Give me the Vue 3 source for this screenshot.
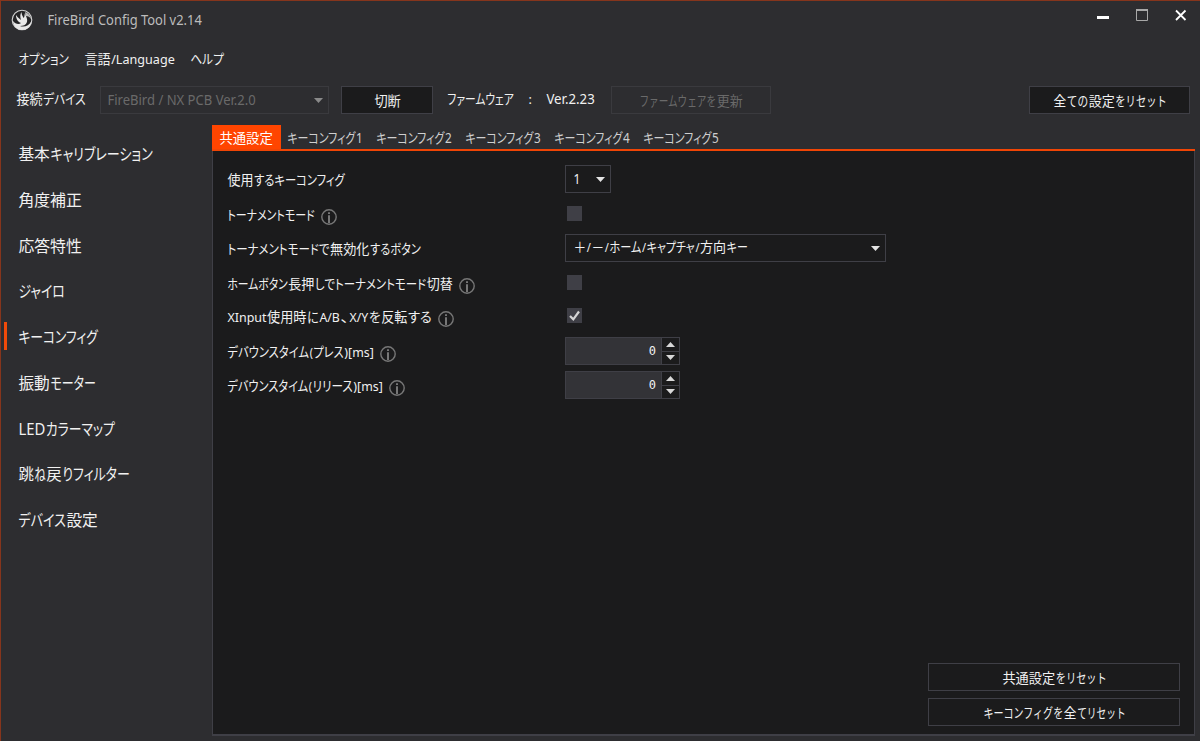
<template>
  <div class="window">
    <header class="titlebar">
      <svg class="logo" width="22" height="22" viewBox="0 0 22 22">
        <circle cx="11" cy="11" r="9.8" fill="#242426" stroke="#d4d4d4" stroke-width="1.1" />
        <path d="M2 12C4 15 8 16 10 14C7 13 5 10 5 6C7 9 9 10 10 11C9 8 9 5 10.5 3C10.5 6 12 7 12.5 9C14 8 13 5 14.5 3.5C14 7 17 9 16 13C15 16 12 17 9 17C13 18.5 18 17 20.5 12C20 18 16 21 11 21C6 21 2 17 2 12Z" fill="#e8e8e8" />
        <path d="M14 3C17 4 20 7 20 10C19 8 17 7 15 7Z" fill="#bdbdbd" />
      </svg>
      <FitText class="title" text="FireBird Config Tool v2.14" :width="155" :size="14" :baseline="25" :height="40" />
      <div class="window-buttons">
        <svg width="94" height="24" viewBox="0 0 94 24">
          <rect x="1" y="15" width="12" height="3" fill="#fff" />
          <path d="M40.5 9V19.5H51.5V9" fill="none" stroke="#a8a8a8" />
          <rect x="40" y="8" width="12" height="2" fill="#a8a8a8" />
          <path d="M80 9.5L89.5 19M89.5 9.5L80 19" stroke="#fff" stroke-width="1.8" />
        </svg>
      </div>
    </header>

    <nav class="menubar">
      <FitText v-for="m in menus" :key="m.text" :text="m.text" :width="m.width" :baseline="24" :height="39" />
    </nav>

    <div class="device-bar">
      <FitText text="接続デバイス" :width="70" :baseline="18" />
      <div class="combo disabled device">
        <FitText text="FireBird / NX PCB Ver.2.0" :width="149" :size="14" :baseline="18" :height="26" />
        <svg class="arrow" width="9" height="5"><path d="M0 0H9L4.5 5Z" fill="#8a8a8a" /></svg>
      </div>
      <button class="btn disconnect"><FitText text="切断" :width="27" :baseline="19" :height="26" /></button>
      <FitText class="fw" text="ファームウェア" :width="67" :baseline="18" />
      <FitText class="colon" text=":" :width="4" :baseline="18" />
      <FitText class="version" text="Ver.2.23" :width="49" :size="13.8" :baseline="18" />
      <button class="btn disabled update"><FitText text="ファームウェアを更新" :width="104" :baseline="19" :height="26" /></button>
      <button class="btn reset-all"><FitText text="全ての設定をリセット" :width="114" :baseline="19" :height="26" /></button>
    </div>

    <div class="body">
      <aside class="sidebar">
        <div
          v-for="(item, i) in pages"
          :key="item.text"
          class="page"
          :class="{ active: page === i }"
          @click="page = i"
        >
          <FitText :text="item.text" :width="item.width" :size="16" :baseline="29" :height="45" />
        </div>
      </aside>

      <main class="content">
        <div class="tabs">
          <div
            v-for="(t, i) in tabs"
            :key="t"
            class="tab"
            :class="{ active: tab === i }"
            @click="tab = i"
          >
            <FitText :text="t" :width="i ? 76 : 54" :size="13.5" :baseline="17.5" :height="24" />
          </div>
        </div>

        <section class="panel">
          <div class="row r1">
            <div class="name"><FitText text="使用するキーコンフィグ" :width="118" /></div>
            <div class="combo small">
              <FitText text="1" :width="7.5" :size="14" :baseline="18" :height="26" />
              <svg class="arrow" width="9" height="5"><path d="M0 0H9L4.5 5Z" fill="#e4e4e4" /></svg>
            </div>
          </div>

          <div class="row r2">
            <div class="name"><FitText text="トーナメントモード" :width="88" /><InfoIcon class="info" /></div>
            <span class="check" @click="tournament = !tournament"><CheckMark v-if="tournament" /></span>
          </div>

          <div class="row r3">
            <div class="name"><FitText text="トーナメントモードで無効化するボタン" :width="194" /></div>
            <div class="combo wide">
              <FitText text="＋/－/ホーム/キャプチャ/方向キー" :width="175" :baseline="17" :height="26" />
              <svg class="arrow" width="9" height="5"><path d="M0 0H9L4.5 5Z" fill="#e4e4e4" /></svg>
            </div>
          </div>

          <div class="row r4">
            <div class="name"><FitText text="ホームボタン長押しでトーナメントモード切替" :width="226" /><InfoIcon class="info" /></div>
            <span class="check" @click="longPress = !longPress"><CheckMark v-if="longPress" /></span>
          </div>

          <div class="row r5">
            <div class="name"><FitText text="XInput使用時にA/B、X/Yを反転する" :width="205" /><InfoIcon class="info" /></div>
            <span class="check" @click="swapButtons = !swapButtons"><CheckMark v-if="swapButtons" /></span>
          </div>

          <div v-for="d in debounce" :key="d.text" class="row" :class="d.cls">
            <div class="name"><FitText :text="d.text" :width="d.width" /><InfoIcon class="info" /></div>
            <div class="spin">
              <span class="value">{{ d.value }}</span>
              <div class="steps">
                <span class="step" @click="d.value++"><svg width="9" height="5"><path d="M0 5H9L4.5 0Z" fill="#d8d8d8" /></svg></span>
                <span class="step" @click="d.value = Math.max(0, d.value - 1)"><svg width="9" height="5"><path d="M0 0H9L4.5 5Z" fill="#d8d8d8" /></svg></span>
              </div>
            </div>
          </div>

          <div class="actions">
            <button class="btn"><FitText text="共通設定をリセット" :width="105" :baseline="19" :height="26" /></button>
            <button class="btn"><FitText text="キーコンフィグを全てリセット" :width="143" :baseline="19" :height="26" /></button>
          </div>
        </section>
      </main>
    </div>
  </div>
</template>

<script setup>
import { ref, reactive, h } from 'vue';

const ctx = document.createElement('canvas').getContext('2d');

// Split a label into kanji, kana and latin runs. Kana are set narrower than the
// kanji so that the whole label takes up the given width.
const splitRuns = (text, width, size) => {
  const parts = text.match(/[\u3400-\u9fff]+|[\u3001-\u30ff]+|[\uff00-\uffef]+|[ -~]+/g) || [];
  ctx.font = `${size}px "Noto Sans"`;
  const runs = parts.map((t) => {
    if (/[\u3001-\u30ff]/.test(t)) {
      const small = (t.match(/[ァィゥェォャュョッ、]/g) || []).length;
      return { t, kana: true, w: t.length - small * 0.25 };
    }
    if (/[ -~]/.test(t)) return { t, w: ctx.measureText(t).width * 0.95 };
    return { t, w: t.length * size, full: /[\uff00-\uffef]/.test(t) };
  });
  const sum = (list) => list.reduce((a, r) => a + r.w, 0);
  const kana = runs.filter((r) => r.kana);
  const stretch = kana.length ? kana : runs;
  const rest = width - (kana.length ? sum(runs.filter((r) => !r.kana)) : 0);
  const k = rest / sum(stretch);
  stretch.forEach((r) => { r.w *= k; });
  let x = 0;
  runs.forEach((r) => { r.x = x; x += r.w; });
  return runs;
};

const FitText = ({ text, width, size = 13.33, baseline = 20, height = 28 }) =>
  h('svg', { width, height, style: { fontSize: `${size}px` } }, [
    h('text', { y: baseline, fill: 'currentColor' }, splitRuns(text, width, size).map((r) =>
      h('tspan', {
        x: r.x + 0.4,
        textLength: r.w - 0.6,
        lengthAdjust: 'spacingAndGlyphs',
        class: { 'full-width': r.full },
      }, r.t))),
  ]);
FitText.props = ['text', 'width', 'size', 'baseline', 'height'];

const InfoIcon = () => h('svg', { width: 16, height: 16, viewBox: '0 0 16 16' }, [
  h('circle', { cx: 8, cy: 8, r: 7.2, fill: 'none', stroke: '#777', 'stroke-width': 1.4 }),
  h('path', { d: 'M8 3.2V5M8 6.3V14', stroke: '#777', 'stroke-width': 2 }),
]);

const CheckMark = () => h('svg', { width: 15, height: 15 }, [
  h('path', { d: 'M3 8L6.3 11.3L12 3.5', fill: 'none', stroke: '#d4d4d4', 'stroke-width': 2.2 }),
]);

const menus = [
  { text: 'オプション', width: 51 },
  { text: '言語/Language', width: 91 },
  { text: 'ヘルプ', width: 34 },
];

const pages = [
  { text: '基本キャリブレーション', width: 135 },
  { text: '角度補正', width: 64 },
  { text: '応答特性', width: 64 },
  { text: 'ジャイロ', width: 47 },
  { text: 'キーコンフィグ', width: 80 },
  { text: '振動モーター', width: 78 },
  { text: 'LEDカラーマップ', width: 97 },
  { text: '跳ね戻りフィルター', width: 112 },
  { text: 'デバイス設定', width: 80 },
];
const page = ref(4);

const tabs = ['共通設定', 'キーコンフィグ1', 'キーコンフィグ2', 'キーコンフィグ3', 'キーコンフィグ4', 'キーコンフィグ5'];
const tab = ref(0);

const tournament = ref(false);
const longPress = ref(false);
const swapButtons = ref(true);

const debounce = reactive([
  { text: 'デバウンスタイム(プレス)[ms]', width: 147, value: 0, cls: 'r6' },
  { text: 'デバウンスタイム(リリース)[ms]', width: 156, value: 0, cls: 'r7' },
]);
</script>

<style>
body {
  background: #2d2d30;
  overflow: hidden;
}

.full-width {
  font-feature-settings: normal;
}
</style>

<style scoped>
.window {
  box-sizing: border-box;
  width: 1200px;
  height: 741px;
  display: flex;
  flex-direction: column;
  background: #2d2d30;
  border-top: 1px solid #86351c;
  border-left: 1px solid #86351c;
  color: #f1f1f1;
  font-family: "Noto Sans", "Noto Sans CJK JP", sans-serif;
  font-size: 13.33px;
  font-feature-settings: "palt";
  user-select: none;
}

svg {
  display: block;
  flex: none;
  overflow: visible;
}

.titlebar {
  display: flex;
  height: 39px;
  padding-left: 10px;
}

.logo {
  margin-top: 8px;
}

.title {
  margin: -1px 0 0 14px;
  color: #bcbcbc;
}

.window-buttons {
  margin: 0 10px 0 auto;
}

.menubar {
  display: flex;
  gap: 15px;
  height: 46px;
  padding-left: 17px;
}

.device-bar {
  display: flex;
  height: 28px;
  padding: 0 10px 0 15px;
}

.combo,
.btn {
  box-sizing: border-box;
  display: flex;
  height: 28px;
  border: 1px solid #3f3f46;
  background: #1b1b1c;
  color: inherit;
}

.btn {
  justify-content: center;
  padding: 0;
  font-family: inherit;
}

.combo {
  justify-content: space-between;
  align-items: center;
  padding: 0 5px 0 7px;
}

.disabled {
  background: #2d2d30;
  border-color: #3a3a3e;
  color: #6a6a6a;
}

.device {
  width: 229px;
  margin-left: 14px;
  padding-left: 6px;
}

.disconnect {
  width: 92px;
  margin-left: 12px;
}

.fw {
  margin-left: 14px;
}

.colon {
  margin-left: 14px;
}

.version {
  margin-left: 14px;
}

.update {
  width: 160px;
  margin-left: 16px;
}

.reset-all {
  width: 161px;
  margin-left: auto;
}

.body {
  display: flex;
  flex: 1;
  padding-top: 11px;
}

.sidebar {
  width: 211px;
  padding-top: 6px;
}

.page {
  display: flex;
  height: 45.75px;
  padding-left: 17px;
}

.page.active::before {
  content: "";
  width: 3px;
  height: 28px;
  margin: 8px 11px 0 -14px;
  background: #f04a0a;
}

.content {
  width: 983px;
  height: 611px;
  display: flex;
  flex-direction: column;
}

.tabs {
  display: flex;
  height: 24px;
  border-bottom: 2px solid #f04505;
}

.tab {
  width: 89.1px;
  padding-left: 6.5px;
  box-sizing: border-box;
  color: #cfcfcf;
}

.tab.active {
  width: 68.5px;
  background: #ff4500;
  color: #fff;
}

.panel {
  flex: 1;
  display: flex;
  flex-direction: column;
  padding: 14px 14px 8px;
  background: #1b1b1c;
  border: 1px solid #3f3f46;
  border-top: 0;
  border-bottom-width: 2px;
}

.row {
  display: flex;
  height: 28px;
}

.r2,
.r4,
.r6 {
  margin-top: 7px;
}

.r3,
.r7 {
  margin-top: 6px;
}

.r5 {
  margin-top: 5px;
}

.name {
  width: 338px;
  display: flex;
}

.info {
  margin: 9px 0 0 5.5px;
}

.small {
  width: 46px;
}

.wide {
  width: 321px;
}

.check {
  width: 15px;
  height: 15px;
  margin: 6px 0 0 2px;
  background: #3f3f46;
}

.spin {
  box-sizing: border-box;
  width: 115px;
  height: 28px;
  display: flex;
  border: 1px solid #3f3f46;
}

.value {
  flex: 1;
  padding-right: 5px;
  background: #333337;
  font: 12px/27px "DejaVu Sans Mono", monospace;
  text-align: right;
}

.steps {
  width: 17px;
  display: flex;
  flex-direction: column;
  gap: 1px;
  border-left: 1px solid #3f3f46;
  background: #3f3f46;
}

.step {
  flex: 1;
  display: flex;
  align-items: center;
  justify-content: center;
  background: #1b1b1c;
}

.actions {
  width: 252px;
  margin: auto 0 0 auto;
  display: flex;
  flex-direction: column;
  gap: 7px;
}
</style>
